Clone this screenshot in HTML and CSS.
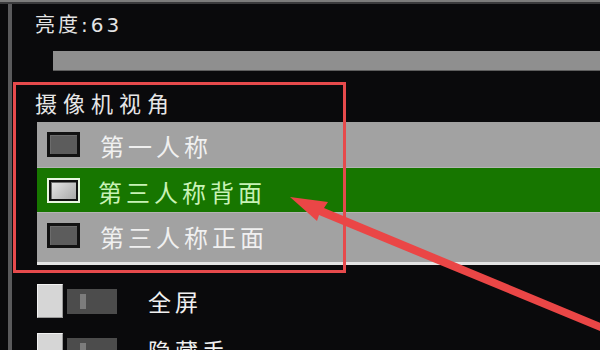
FILE: index.html
```html
<!DOCTYPE html>
<html lang="zh-CN">
<head>
<meta charset="utf-8">
<title>视频设置</title>
<link rel="stylesheet" href="styles.css">
</head>
<body>
<div class="topbar"></div>
<div class="panel">
  <div class="label">亮度:63</div>
  <div class="slider"></div>
  <div class="heading">摄像机视角</div>
  <div class="list">
    <div class="row"><span class="box"></span><span class="opt">第一人称</span></div>
    <div class="row selected"><span class="box"></span><span class="opt">第三人称背面</span></div>
    <div class="row last"><span class="box"></span><span class="opt">第三人称正面</span></div>
  </div>
  <div class="toggles">
    <div class="toggle"><span class="knob"></span><span class="track"><span class="notch"></span></span><span class="tlabel">全屏</span></div>
    <div class="toggle"><span class="knob"></span><span class="track"><span class="notch"></span></span><span class="tlabel">隐藏手</span></div>
  </div>
</div>
<div class="redbox"></div>
<svg class="arrow" width="600" height="350" viewBox="0 0 600 350">
  <polygon points="290,197 328,202 324,208 620,331 617,338 319,215 317,221" fill="#ea4646"/>
</svg>
</body>
</html>
```

FILE: styles.css
```css
html, body {
  margin: 0;
  padding: 0;
}
body {
  width: 600px;
  height: 350px;
  overflow: hidden;
  background: #0a0a0c;
  font-family: "Noto Sans CJK SC", "Noto Sans", sans-serif;
  color: #e8e8e8;
  position: relative;
}
.topbar {
  height: 2px;
  background: #7c7c7c;
  border-bottom: 2px solid #3a3a3c;
}
.panel {
  margin-left: 8px;
  border-left: 4px solid #5a5a5c;
  height: 346px;
}
.label {
  height: 38px;
  padding-top: 9px;
  padding-left: 23px;
  font-family: "DejaVu Sans", "Noto Sans CJK SC", sans-serif;
  font-size: 20px;
  line-height: 24px;
  letter-spacing: 3px;
  color: #e4e4e4;
}
.slider {
  height: 19px;
  margin-left: 41px;
  background: #8f8f8f;
  border-bottom: 1px solid #5e5e5e;
}
.heading {
  height: 34px;
  padding-top: 17px;
  padding-left: 23px;
  font-size: 22px;
  line-height: 28px;
  letter-spacing: 6px;
  color: #e6e6e6;
}
.list {
  margin-left: 25px;
  background: #a2a2a2;
  padding-bottom: 4px;
  border-bottom: 3px solid #e4e4e4;
}
.row {
  height: 45px;
  display: flex;
  align-items: center;
  padding-left: 10px;
  gap: 20px;
}
.row.selected {
  height: 46px;
  background: #177600;
  border-top: 1px solid #b4b4b4;
  border-bottom: 1px solid #b4b4b4;
  box-sizing: border-box;
}
.box {
  width: 27px;
  height: 19px;
  border: 3px solid #121212;
  background: #5c5c5c;
  box-shadow: inset 1px 1px 0 #6c6c6c;
}
.selected .box {
  width: 25px;
  height: 17px;
  border: 2px solid #111;
  outline: 2px solid #e8f7e0;
  background: linear-gradient(135deg, #e6e6e6, #a8a8a8);
  margin-left: 2px;
  margin-right: 0;
}
.opt {
  font-size: 24px;
  line-height: 30px;
  letter-spacing: 4px;
  color: #f0f0f0;
  padding-top: 3px;
}
.selected .opt {
  color: #c8f2b6;
}
.toggles {
  padding-top: 19px;
  padding-left: 25px;
  display: flex;
  flex-direction: column;
  gap: 15px;
}
.toggle {
  display: flex;
  align-items: center;
  height: 34px;
}
.knob {
  width: 24px;
  height: 32px;
  background: #d6d6d6;
  border: 1px solid #f2f2f2;
  border-right-color: #9a9a9a;
  border-bottom-color: #9a9a9a;
}
.track {
  width: 50px;
  height: 25px;
  margin-left: 4px;
  background: #4c4c4c;
  position: relative;
  display: flex;
  align-items: center;
}
.notch {
  width: 6px;
  height: 15px;
  margin-left: 13px;
  background: #7c7c7c;
}
.tlabel {
  margin-left: 31px;
  font-size: 23px;
  line-height: 30px;
  letter-spacing: 4px;
  color: #f0f0f0;
}
.redbox {
  position: absolute;
  left: 13px;
  top: 82px;
  width: 327px;
  height: 185px;
  border: 3px solid #e64a4c;
}
.arrow {
  position: absolute;
  left: 0;
  top: 0;
}
```
